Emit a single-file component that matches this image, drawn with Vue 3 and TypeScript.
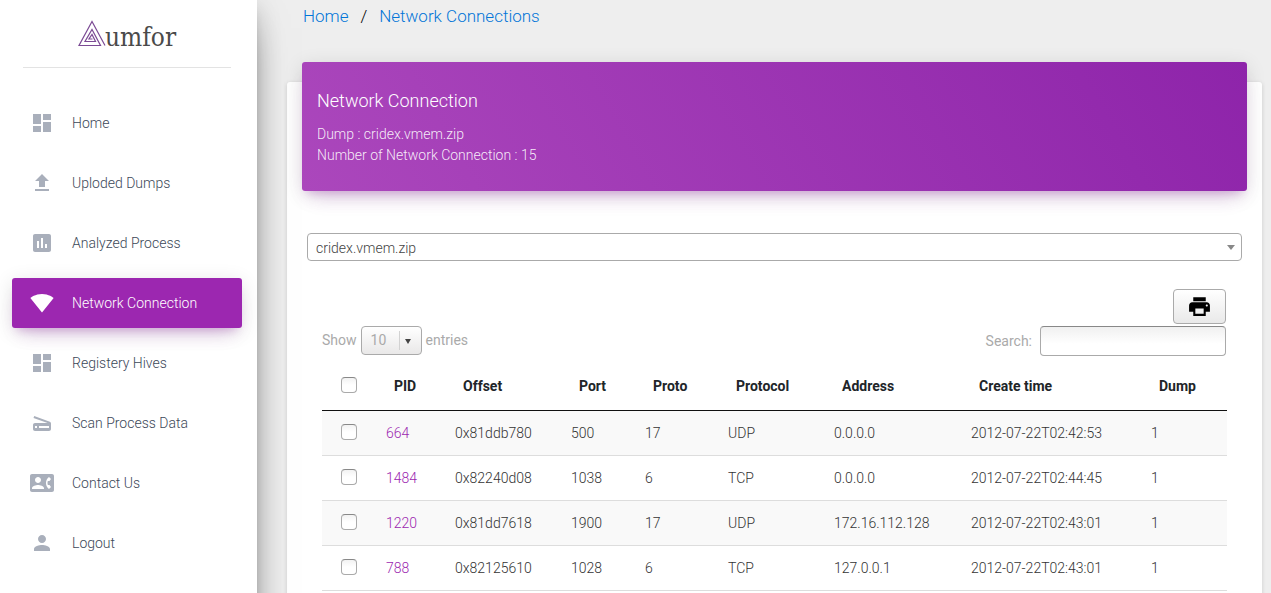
<script setup lang="ts">
import { computed, ref } from 'vue'

interface NavItem {
  label: string
  icon: string
  active?: boolean
}

interface Connection {
  pid: number
  offset: string
  port: number
  proto: number
  protocol: string
  address: string
  created: string
  dump: number
}

const dashboard = 'M3 13h8V3H3v10zm0 8h8v-6H3v6zm10 0h8V11h-8v10zm0-18v6h8V3h-8z'

const navItems: NavItem[] = [
  { label: 'Home', icon: dashboard },
  { label: 'Uploded Dumps', icon: 'M9 16h6v-6h4l-7-7-7 7h4zm-4 2h14v2H5z' },
  {
    label: 'Analyzed Process',
    icon: 'M19 3H5c-1.1 0-2 .9-2 2v14c0 1.1.9 2 2 2h14c1.1 0 2-.9 2-2V5c0-1.1-.9-2-2-2zM9 17H7v-7h2v7zm4 0h-2V7h2v10zm4 0h-2v-4h2v4z',
  },
  {
    label: 'Network Connection',
    icon: 'M12.01 21.49L23.64 7c-.45-.34-4.93-4-11.64-4C5.28 3 .81 6.66.36 7l11.63 14.49.01.01.01-.01z',
    active: true,
  },
  { label: 'Registery Hives', icon: dashboard },
  {
    label: 'Scan Process Data',
    icon: 'M19.8 10.7L4.2 5l-.7 1.9L17.6 12H5c-1.1 0-2 .9-2 2v4c0 1.1.9 2 2 2h14c1.1 0 2-.9 2-2v-5.5c0-.8-.5-1.6-1.2-1.8zM7 17H5v-2h2v2zm12 0H9v-2h10v2z',
  },
  {
    label: 'Contact Us',
    icon: 'M22 3H2C.9 3 0 3.9 0 5v14c0 1.1.9 2 2 2h20c1.1 0 1.99-.9 1.99-2L24 5c0-1.1-.9-2-2-2zM8 6c1.66 0 3 1.34 3 3s-1.34 3-3 3-3-1.34-3-3 1.34-3 3-3zm6 12H2v-1c0-2 4-3.1 6-3.1s6 1.1 6 3.1v1zm3.85-4h1.64L21 16l-1.99 1.99c-1.31-.98-2.28-2.38-2.73-3.99-.18-.64-.28-1.31-.28-2s.1-1.36.28-2c.45-1.62 1.42-3.01 2.73-3.99L21 8l-1.51 2h-1.64c-.22.63-.35 1.3-.35 2s.13 1.37.35 2z',
  },
  {
    label: 'Logout',
    icon: 'M12 12c2.21 0 4-1.79 4-4s-1.79-4-4-4-4 1.79-4 4 1.79 4 4 4zm0 2c-2.67 0-8 1.34-8 4v2h16v-2c0-2.66-5.33-4-8-4z',
  },
]

const headings = ['PID', 'Offset', 'Port', 'Proto', 'Protocol', 'Address', 'Create time', 'Dump']

const connections: Connection[] = [
  { pid: 664, offset: '0x81ddb780', port: 500, proto: 17, protocol: 'UDP', address: '0.0.0.0', created: '2012-07-22T02:42:53', dump: 1 },
  { pid: 1484, offset: '0x82240d08', port: 1038, proto: 6, protocol: 'TCP', address: '0.0.0.0', created: '2012-07-22T02:44:45', dump: 1 },
  { pid: 1220, offset: '0x81dd7618', port: 1900, proto: 17, protocol: 'UDP', address: '172.16.112.128', created: '2012-07-22T02:43:01', dump: 1 },
  { pid: 788, offset: '0x82125610', port: 1028, proto: 6, protocol: 'TCP', address: '127.0.0.1', created: '2012-07-22T02:43:01', dump: 1 },
]

const dump = ref('cridex.vmem.zip')
const pageSize = ref('10')
const search = ref('')
const selected = ref<number[]>([])

const visible = computed(() =>
  connections.filter((c) =>
    Object.values(c).join(' ').toLowerCase().includes(search.value.toLowerCase()),
  ),
)

const allSelected = computed({
  get: () => visible.value.length > 0 && visible.value.every((c) => selected.value.includes(c.pid)),
  set: (on: boolean) => {
    selected.value = on ? visible.value.map((c) => c.pid) : []
  },
})

function printPage() {
  window.print()
}
</script>

<template>
  <div class="layout">
    <aside class="sidebar">
      <a class="logo" href="#">
        <svg class="logo-mark" viewBox="0 0 28 27" aria-hidden="true">
          <path d="M27 25.500L14 1.500L1 25.500H22.500L14 9.500L7 21.500H17.500L14 14.500L11 19H14.500" />
        </svg>
        <span>umfor</span>
      </a>
      <nav class="nav">
        <a
          v-for="item in navItems"
          :key="item.label"
          class="nav-item"
          :class="{ active: item.active }"
          href="#"
        >
          <svg class="icon" viewBox="0 0 24 24" aria-hidden="true"><path :d="item.icon" /></svg>
          <span>{{ item.label }}</span>
        </a>
      </nav>
    </aside>

    <main class="main">
      <nav class="breadcrumb">
        <a href="#">Home</a>
        <span>/</span>
        <a href="#">Network Connections</a>
      </nav>

      <section class="card">
        <header class="card-header">
          <h4>Network Connection</h4>
          <p>Dump : cridex.vmem.zip</p>
          <p>Number of Network Connection : 15</p>
        </header>

        <div class="picker dump-picker">
          <select v-model="dump" aria-label="Dump">
            <option>cridex.vmem.zip</option>
          </select>
        </div>

        <div class="table-area">
          <div class="actions">
            <button class="print" type="button" aria-label="Print" @click="printPage">
              <svg class="icon" viewBox="0 0 24 24" aria-hidden="true">
                <path d="M18 3H6v4h12V3zM19 8H5c-1.660 0-3 1.340-3 3v6h4v4h12v-4h4v-6c0-1.660-1.340-3-3-3zm-3 11H8v-5h8v5zm3-7c-.55 0-1-.45-1-1s.45-1 1-1 1 .45 1 1-.45 1-1 1z" />
              </svg>
            </button>
          </div>

          <div class="controls">
            <div class="length">
              <label for="page-size">Show</label>
              <div class="picker size-picker">
                <select id="page-size" v-model="pageSize">
                  <option>10</option>
                </select>
              </div>
              <span>entries</span>
            </div>
            <div class="filter">
              <label for="search">Search:</label>
              <input id="search" v-model="search" type="search" />
            </div>
          </div>

          <table>
            <colgroup>
              <col class="c-check" />
              <col class="c-pid" />
              <col class="c-offset" />
              <col class="c-port" />
              <col class="c-proto" />
              <col class="c-protocol" />
              <col class="c-address" />
              <col class="c-created" />
              <col class="c-dump" />
            </colgroup>
            <thead>
              <tr>
                <th class="check">
                  <input v-model="allSelected" type="checkbox" aria-label="Select all" />
                </th>
                <th v-for="heading in headings" :key="heading" scope="col">{{ heading }}</th>
              </tr>
            </thead>
            <tbody>
              <tr v-for="row in visible" :key="row.pid">
                <td class="check">
                  <input v-model="selected" type="checkbox" :value="row.pid" :aria-label="`Select ${row.pid}`" />
                </td>
                <td><a href="#">{{ row.pid }}</a></td>
                <td>{{ row.offset }}</td>
                <td>{{ row.port }}</td>
                <td>{{ row.proto }}</td>
                <td>{{ row.protocol }}</td>
                <td>{{ row.address }}</td>
                <td>{{ row.created }}</td>
                <td>{{ row.dump }}</td>
              </tr>
            </tbody>
          </table>
        </div>
      </section>
    </main>
  </div>
</template>

<style>
body {
  background: #eee;
}
</style>

<style scoped>
.layout,
.layout * {
  box-sizing: border-box;
}

.layout {
  display: flex;
  height: 100vh;
  overflow: hidden;
  background: #eee;
  color: #333;
  font: 300 14px/20px Roboto, 'Liberation Sans', sans-serif;
}

a {
  text-decoration: none;
}

.icon {
  flex: none;
  width: 24px;
  height: 24px;
  fill: currentColor;
}

.sidebar {
  position: relative;
  z-index: 2;
  flex: none;
  width: 257px;
  height: calc(100vh + 60px);
  background: #fff;
  box-shadow:
    0 16px 38px -12px rgba(0, 0, 0, 0.56),
    0 4px 25px 0 rgba(0, 0, 0, 0.12),
    0 8px 10px -5px rgba(0, 0, 0, 0.2);
}

.logo {
  display: flex;
  justify-content: center;
  height: 68px;
  margin: 0 26px 30px 23px;
  padding-top: 20px;
  border-bottom: 1px solid #e3e3e3;
  color: #4a4a4a;
  font: 400 26px/34px 'DejaVu Serif Condensed', 'DejaVu Serif', serif;
}

.logo-mark {
  width: 28px;
  height: 27px;
  fill: none;
  stroke: #7b4a94;
  stroke-width: 1.2;
}

.logo span {
  margin-left: -1px;
}

.nav {
  display: flex;
  flex-direction: column;
  gap: 10px;
  margin: 0 15px 0 12px;
}

.nav-item {
  display: flex;
  align-items: center;
  gap: 18px;
  height: 50px;
  padding: 0 18px;
  border-radius: 3px;
  color: #3c4858;
}

.nav-item .icon {
  color: #a9afbb;
}

.nav-item.active {
  background: #9c27b0;
  box-shadow:
    0 12px 20px -10px rgba(156, 39, 176, 0.28),
    0 4px 20px 0 rgba(0, 0, 0, 0.12),
    0 7px 8px -5px rgba(156, 39, 176, 0.2);
  color: #fff;
}

.nav-item.active .icon {
  color: #fff;
}

.main {
  flex: 1;
  min-width: 0;
  padding: 4px 9px 30px 30px;
  overflow-y: auto;
  scrollbar-width: none;
}

.breadcrumb {
  display: flex;
  gap: 12px;
  margin-bottom: 54px;
  padding-left: 16px;
  color: #000;
  font-size: 17px;
  line-height: 24px;
}

.breadcrumb a {
  color: #0275d8;
}

.card {
  padding: 0 15px 30px;
  border-radius: 3px;
  background: #fff;
  box-shadow: 0 1px 4px 0 rgba(0, 0, 0, 0.14);
}

.card-header {
  position: relative;
  top: -20px;
  height: 129px;
  padding: 27px 15px 0;
  border-radius: 3px;
  background: linear-gradient(60deg, #ab47bc, #8e24aa);
  box-shadow:
    0 12px 20px -10px rgba(156, 39, 176, 0.28),
    0 4px 20px 0 rgba(0, 0, 0, 0.12),
    0 7px 8px -5px rgba(156, 39, 176, 0.2);
  color: #fff;
}

.card-header h4 {
  margin: 0 0 11px;
  font-weight: 300;
  font-size: 18px;
  line-height: 24px;
}

.card-header p {
  margin: 0;
  line-height: 21px;
  color: rgba(255, 255, 255, 0.9);
}

.picker {
  position: relative;
}

.picker select {
  width: 100%;
  appearance: none;
  border: 1px solid #aaa;
  border-radius: 4px;
  font: inherit;
}

.picker::after {
  position: absolute;
  right: 7px;
  top: 12px;
  border: 4px solid transparent;
  border-top: 5px solid #888;
  border-bottom: 0;
  content: '';
  pointer-events: none;
}

.dump-picker {
  margin: 22px 5px 28px;
}

.dump-picker select {
  display: block;
  height: 28px;
  padding: 2px 8px 0;
  background: #fff;
  color: #444;
}

.table-area {
  padding: 0 20px;
}

.actions {
  display: flex;
  justify-content: flex-end;
  padding-right: 1px;
}

.print {
  display: flex;
  align-items: center;
  justify-content: center;
  width: 53px;
  height: 35px;
  padding: 0 1px 0 0;
  border: 1px solid #aaa;
  border-radius: 4px;
  background: linear-gradient(#fff, #e9e9e9);
  color: #000;
}

.print .icon {
  width: 25px;
  height: 25px;
}

.controls {
  display: flex;
  justify-content: space-between;
  padding: 2px 1px 9px 0;
  color: #aaa;
  font-weight: 400;
}

.length,
.filter {
  display: flex;
  align-items: center;
}

.length {
  gap: 4px;
  height: 29px;
}

.length label,
.length span {
  padding-bottom: 2px;
}

.size-picker select {
  display: block;
  width: 61px;
  height: 29px;
  padding: 0 9px 2px;
  background: linear-gradient(#fff, #e9e8e8);
  color: #aaa;
}

.size-picker::before {
  position: absolute;
  top: 5px;
  right: 22px;
  width: 1px;
  height: 19px;
  background: #d2d2d2;
  content: '';
}

.size-picker::after {
  right: 11px;
  top: 13px;
  border-width: 5px 3px 0;
  border-top-color: #444;
}

.filter {
  gap: 8px;
}

.filter input {
  width: 186px;
  height: 30px;
  padding: 0 8px;
  border: 1px solid #aaa;
  border-top-color: #888;
  border-radius: 4px;
  background: linear-gradient(#f0f0f0, #fff 60%);
  font: inherit;
}

table {
  width: 100%;
  border-collapse: separate;
  border-spacing: 0;
  table-layout: fixed;
  color: #333;
}

.c-check { width: 54px; }
.c-pid { width: 69px; }
.c-offset { width: 116px; }
.c-port { width: 74px; }
.c-proto { width: 83px; }
.c-protocol { width: 106px; }
.c-address { width: 137px; }
.c-created { width: 180px; }
.c-dump { width: 86px; }

th {
  height: 46px;
  padding: 0 0 4px 18px;
  border-bottom: 1px solid #111;
  color: #212529;
  font-weight: 700;
  text-align: left;
  white-space: nowrap;
}

td {
  height: 45px;
  padding: 0 0 0 10px;
  border-bottom: 1px solid #ddd;
  white-space: nowrap;
}

tbody tr:nth-child(odd) {
  background: #f9f9f9;
}

td a {
  color: #9c27b0;
}

th.check {
  padding: 0 0 6px 19px;
}

td.check {
  padding: 0 0 2px 19px;
}

.check input {
  display: block;
  width: 16px;
  height: 16px;
  margin: 0;
  appearance: none;
  border: 1px solid #aaa;
  border-top-color: #888;
  border-radius: 4px;
  background: linear-gradient(#f2f2f2, #fff 50%);
}

.check input:checked {
  background: #9c27b0;
}
</style>
